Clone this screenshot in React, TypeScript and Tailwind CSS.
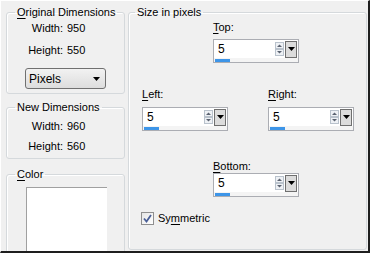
import type { ReactNode } from "react";

function Group({
  title,
  className,
  legendClass,
  children,
}: {
  title: ReactNode;
  className?: string;
  legendClass?: string;
  children: ReactNode;
}) {
  return (
    <fieldset
      className={`rounded-[3px] border border-[#d5d9dc] shadow-[inset_1px_1px_0_#ffffff] ${className ?? ""}`}
    >
      <legend className={`px-[2px] leading-[14px] ${legendClass ?? "ml-[8px]"}`}>{title}</legend>
      {children}
    </fieldset>
  );
}

function U({ children }: { children: ReactNode }) {
  return <span className="underline underline-offset-[2px]">{children}</span>;
}

function InfoRow({ label, value, h }: { label: string; value: string; h: string }) {
  return (
    <div className={`grid grid-cols-[56px_1fr] items-center gap-x-[4px] ${h}`}>
      <span className="text-right">{label}</span>
      <span>{value}</span>
    </div>
  );
}

function Spin({ value }: { value: string }) {
  return (
    <div className="flex h-[24px] w-[86px] flex-col border border-[#abadb3] bg-white">
      <div className="flex flex-1 items-center">
        <span className="flex-1 pl-[4px] text-[12px]">{value}</span>
        <svg width="9" height="14" viewBox="0 0 9 14" className="mr-[1px]">
          <rect x="0.5" y="0.5" width="8" height="6" fill="#eef1f5" stroke="#b9c2cc" />
          <rect x="0.5" y="7.5" width="8" height="6" fill="#eef1f5" stroke="#b9c2cc" />
          <path d="M2 5 L4.5 2.5 L7 5 Z" fill="#5a6270" />
          <path d="M2 9 L4.5 11.5 L7 9 Z" fill="#5a6270" />
        </svg>
        <div className="mr-[1px] flex h-[17px] w-[12px] items-center justify-center border border-[#6f6f6f] bg-[#dcdcdc]">
          <svg width="7" height="4" viewBox="0 0 7 4">
            <path d="M0 0 H7 L3.5 4 Z" fill="#000" />
          </svg>
        </div>
      </div>
      <div className="h-[5px] bg-[#f4f4f4] pl-[1px]">
        <div className="mt-[1px] h-[3px] w-[15px] bg-[#3d95e8]" />
      </div>
    </div>
  );
}

function Field({ label, value, className }: { label: ReactNode; value: string; className?: string }) {
  return (
    <div className={className}>
      <div className="leading-[14px]">{label}</div>
      <Spin value={value} />
    </div>
  );
}

export default function App() {
  return (
    <div className="flex h-[253px] w-[370px] overflow-hidden border-b-2 border-l border-r-2 border-t border-b-[#1e1e1e] border-l-white border-r-[#1e1e1e] border-t-white bg-[#f0f0f0] font-['Liberation_Sans',Arial,sans-serif] text-[11px] text-black">
      <div className="flex w-[124px] shrink-0 flex-col pl-[5px]">
        <Group title={<><U>O</U>riginal Dimensions</>} className="mt-[4px] pb-[4px]">
          <div className="-mt-[2px]" />
          <InfoRow label="Width:" value="950" h="h-[22px]" />
          <InfoRow label="Height:" value="550" h="h-[22px]" />
          <div className="ml-[18px] mt-[7px] flex h-[21px] w-[81px] items-center justify-between rounded-[3px] border border-[#707070] bg-gradient-to-b from-[#f2f2f2] to-[#dddddd] pl-[3px] pr-[5px] text-[12px]">
            <span>Pixels</span>
            <svg width="7" height="4" viewBox="0 0 7 4">
              <path d="M0 0 H7 L3.5 4 Z" fill="#000" />
            </svg>
          </div>
        </Group>
        <Group title="New Dimensions" className="mt-[6px] pb-[2px]">
          <div className="mt-[2px]" />
          <InfoRow label="Width:" value="960" h="h-[20px]" />
          <InfoRow label="Height:" value="560" h="h-[20px]" />
        </Group>
        <Group title={<><U>C</U>olor</>} className="mt-[8px] h-[120px]">
          <div className="ml-[19px] mt-[6px] h-[70px] w-[81px] border-l border-t border-[#a0a0a0] bg-white" />
        </Group>
      </div>
      <Group
        title="Size in pixels"
        legendClass="ml-[6px]"
        className="mb-[1px] ml-[3px] mr-[1px] mt-[4px] flex-1"
      >
        <Field label={<><U>T</U>op:</>} value="5" className="ml-[84px] mt-[1px] flex flex-col gap-[5px]" />
        <div className="ml-[13px] mt-[24px] flex gap-[40px]">
          <Field label={<><U>L</U>eft:</>} value="5" className="flex flex-col gap-[6px]" />
          <Field label={<><U>R</U>ight:</>} value="5" className="flex flex-col gap-[6px]" />
        </div>
        <Field label={<><U>B</U>ottom:</>} value="5" className="ml-[84px] mt-[28px] flex flex-col gap-0" />
        <label className="ml-[12px] mt-[13px] flex items-center gap-[4px]">
          <span className="flex h-[13px] w-[13px] items-center justify-center border border-[#8f8f8f] bg-gradient-to-br from-[#e6e6e6] to-white">
            <svg width="9" height="9" viewBox="0 0 9 9">
              <path d="M1 4.5 L3.5 7.5 L8 1" fill="none" stroke="#4a5f97" strokeWidth="1.8" />
            </svg>
          </span>
          <span>
            Sy<U>m</U>metric
          </span>
        </label>
      </Group>
    </div>
  );
}
